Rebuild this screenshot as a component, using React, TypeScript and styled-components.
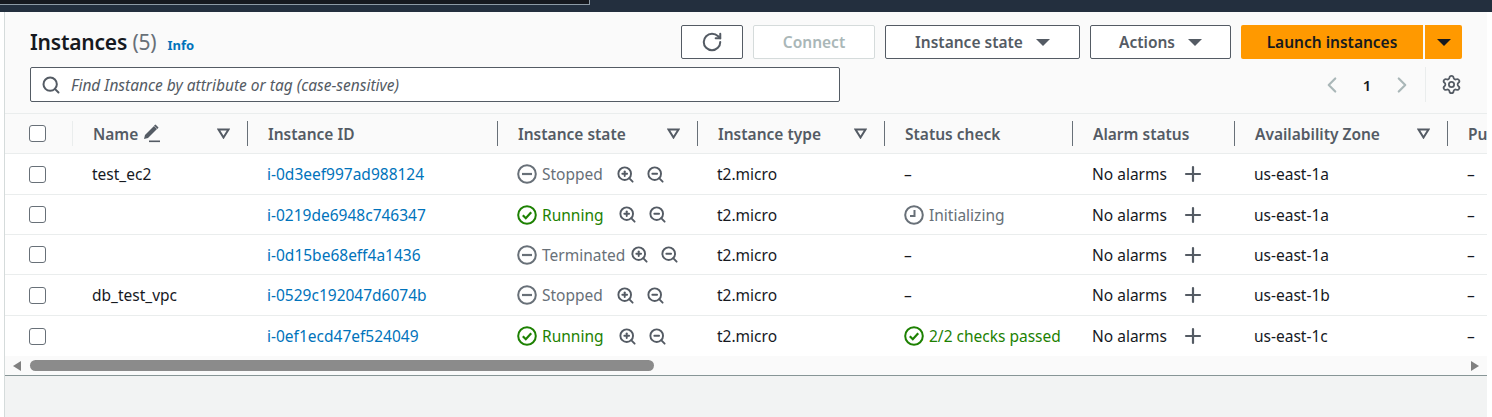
import React from 'react';
import styled, { createGlobalStyle } from 'styled-components';
import { RotateCw, Search, ChevronLeft, ChevronRight, Settings, Plus, ZoomIn, ZoomOut } from 'lucide-react';

const COLUMNS = '67px 175px 250px 200px 187px 188px 162px 213px 40px';

const GlobalStyle = createGlobalStyle`
  html, body {
    margin: 0;
    padding: 0;
    width: 1492px;
    height: 417px;
    overflow: hidden;
    background: #ffffff;
    font-family: "Noto Sans", "Open Sans", sans-serif;
    font-size: 16px;
    color: #16191f;
  }
`;

const TopBar = styled.div`
  height: 12px;
  background: #232f3e;
`;

const TabStrip = styled.div`
  width: 589px;
  height: 4px;
  background: #16191f;
  border-right: 1px solid #8d9aa5;
  border-bottom: 1px solid #8d9aa5;
`;

const Page = styled.div`
  width: 1482px;
  margin-left: 4px;
  border-left: 1px solid #d5dbdb;
  height: 405px;
  display: flex;
  flex-direction: column;
`;

const Panel = styled.section`
  background: #fafafa;
  overflow: hidden;
`;

const PanelHead = styled.div`
  height: 102px;
  box-sizing: border-box;
  padding: 13px 25px 0 25px;
  border-bottom: 1px solid #eaeded;
`;

const TitleRow = styled.div`
  height: 34px;
  display: flex;
  align-items: center;
  justify-content: space-between;
`;

const TitleGroup = styled.div`
  display: flex;
  align-items: baseline;
  gap: 11px;
`;

const Title = styled.h1`
  margin: 0;
  font-size: 21px;
  line-height: 30px;
  font-weight: 600;
  color: #16191f;
  letter-spacing: -0.2px;
  span {
    font-weight: 400;
    color: #687078;
  }
`;

const InfoLink = styled.a`
  font-size: 13px;
  font-weight: 700;
  color: #0073bb;
`;

const Actions = styled.div`
  display: flex;
  gap: 10px;
`;

const Button = styled.button<{ $disabled?: boolean; $width: number }>`
  width: ${p => p.$width}px;
  height: 34px;
  box-sizing: border-box;
  padding: 0;
  display: flex;
  align-items: center;
  justify-content: center;
  gap: 13px;
  background: #ffffff;
  border: 1px solid ${p => (p.$disabled ? '#d5dbdb' : '#545b64')};
  border-radius: 2px;
  font-family: inherit;
  font-size: 15.5px;
  font-weight: 600;
  color: ${p => (p.$disabled ? '#aab7b8' : '#545b64')};
`;

const SplitButton = styled.div`
  display: flex;
  gap: 2px;
`;

const PrimaryButton = styled.button<{ $width: number; $round: string }>`
  width: ${p => p.$width}px;
  height: 34px;
  padding: 0;
  border: 0;
  border-radius: ${p => p.$round};
  display: flex;
  align-items: center;
  justify-content: center;
  background: #ff9900;
  font-family: inherit;
  font-size: 15.5px;
  font-weight: 600;
  color: #16191f;
`;

const Caret = styled.i<{ $color: string; $size?: number }>`
  display: block;
  width: 0;
  height: 0;
  border-left: ${p => p.$size ?? 7}px solid transparent;
  border-right: ${p => p.$size ?? 7}px solid transparent;
  border-top: ${p => p.$size ?? 7}px solid ${p => p.$color};
`;

const FilterRow = styled.div`
  display: flex;
  align-items: center;
  justify-content: space-between;
  margin-top: 8px;
  height: 35px;
`;

const SearchBox = styled.div`
  width: 810px;
  height: 35px;
  box-sizing: border-box;
  padding-left: 10px;
  display: flex;
  align-items: center;
  gap: 10px;
  background: #ffffff;
  border: 1px solid #545b64;
  border-radius: 2px;
  color: #545b64;
`;

const Placeholder = styled.span`
  font-size: 15.5px;
  font-style: italic;
  color: #545b64;
`;

const Pager = styled.div`
  display: flex;
  align-items: center;
  height: 35px;
  color: #aab7b8;
`;

const PageNumber = styled.b`
  width: 44px;
  text-align: center;
  font-size: 15px;
  font-weight: 600;
  color: #16191f;
`;

const PagerGear = styled.div`
  height: 35px;
  margin-left: 10px;
  padding-left: 15px;
  border-left: 1px solid #eaeded;
  display: flex;
  align-items: center;
  color: #545b64;
`;

const TableClip = styled.div`
  overflow: hidden;
`;

const HeadRow = styled.div`
  display: grid;
  grid-template-columns: ${COLUMNS};
  height: 40px;
  border-bottom: 1px solid #eaeded;
  box-sizing: border-box;
  background: #fafafa;
  align-items: center;
`;

const HeadCell = styled.div<{ $divider?: string }>`
  height: 25px;
  box-sizing: border-box;
  display: flex;
  align-items: center;
  justify-content: space-between;
  padding: 0 17px 0 20px;
  white-space: nowrap;
  font-size: 15.5px;
  font-weight: 600;
  color: #545b64;
  border-left: ${p => (p.$divider ? `1px solid ${p.$divider}` : '0')};
`;

const NameLabel = styled.span`
  display: inline-flex;
  align-items: center;
  gap: 5px;
`;

const CheckCell = styled.div`
  padding-left: 24px;
  display: flex;
  align-items: center;
`;

const Checkbox = styled.span`
  display: block;
  width: 17px;
  height: 17px;
  box-sizing: border-box;
  background: #ffffff;
  border: 1px solid #687078;
  border-radius: 3px;
`;

const Row = styled.div<{ $height: number }>`
  display: grid;
  grid-template-columns: ${COLUMNS};
  height: ${p => p.$height}px;
  box-sizing: border-box;
  background: #ffffff;
  border-bottom: 1px solid #eaeded;
  align-items: center;
  font-size: 15.5px;
  &:last-of-type {
    border-bottom: 0;
  }
`;

const Cell = styled.div`
  padding-left: 20px;
  white-space: nowrap;
  overflow: hidden;
  display: flex;
  align-items: center;
  color: #16191f;
`;

const IdLink = styled.a`
  color: #0073bb;
`;

const StatusText = styled.span<{ $color: string }>`
  display: inline-flex;
  align-items: center;
  gap: 5px;
  color: ${p => p.$color};
`;

const ZoomGroup = styled.span<{ $gap: number }>`
  display: inline-flex;
  margin-left: ${p => p.$gap}px;
  gap: 11px;
  color: #545b64;
`;

const AlarmAdd = styled.span`
  display: inline-flex;
  margin-left: 14px;
  color: #545b64;
`;

const ScrollBar = styled.div`
  height: 19px;
  display: flex;
  align-items: center;
  padding: 0 8px;
  background: #fafafa;
  border-bottom: 1px solid #879596;
`;

const ScrollTrack = styled.div`
  flex: 1;
  padding: 0 8px 0 9px;
`;

const Thumb = styled.div`
  width: 624px;
  height: 11px;
  border-radius: 6px;
  background: #8b8b8b;
`;

const Arrow = styled.i<{ $dir: 'left' | 'right' }>`
  display: block;
  width: 0;
  height: 0;
  border-top: 5px solid transparent;
  border-bottom: 5px solid transparent;
  ${p => (p.$dir === 'left' ? 'border-right' : 'border-left')}: 8px solid #808080;
`;

const Footer = styled.div`
  flex: 1;
  background: #f2f3f3;
`;

const StatusIcon = ({ kind }: { kind: string }) => {
  const color = kind === 'ok' ? '#1d8102' : '#687078';
  return (
    <svg width="20" height="20" viewBox="0 0 20 20" fill="none" stroke={color} strokeWidth="2">
      <circle cx="10" cy="10" r="8.8" />
      {kind === 'ok' && <path d="M5.8 10.2l3 3 5.4-6" strokeWidth="2.2" />}
      {kind === 'stop' && <path d="M5 10h10" strokeWidth="2.2" />}
      {kind === 'clock' && <path d="M10.5 5v6H6" />}
    </svg>
  );
};

const PencilIcon = () => (
  <svg width="18" height="19" viewBox="0 0 18 19" fill="#545b64">
    <path d="M1 15l1-4L11 2l3 3-9 9z" />
    <path d="M11 1.5l1.5-1 3 3-1 1.5z" />
    <rect x="6" y="16.5" width="11" height="1.6" />
  </svg>
);

const SortIcon = () => (
  <svg width="13" height="11" viewBox="0 0 13 11" fill="none" stroke="#545b64" strokeWidth="2">
    <path d="M1.5 1.5h10L6.5 9.5z" />
  </svg>
);

const rows = [
  { name: 'test_ec2', id: 'i-0d3eef997ad988124', state: 'Stopped', check: '', az: 'us-east-1a', h: 41 },
  { name: '', id: 'i-0219de6948c746347', state: 'Running', check: 'Initializing', az: 'us-east-1a', h: 40 },
  { name: '', id: 'i-0d15be68eff4a1436', state: 'Terminated', check: '', az: 'us-east-1a', h: 40 },
  { name: 'db_test_vpc', id: 'i-0529c192047d6074b', state: 'Stopped', check: '', az: 'us-east-1b', h: 41 },
  { name: '', id: 'i-0ef1ecd47ef524049', state: 'Running', check: '2/2 checks passed', az: 'us-east-1c', h: 40 },
];

export default function App() {
  return (
    <>
      <GlobalStyle />
      <TopBar>
        <TabStrip />
      </TopBar>
      <Page>
        <Panel>
          <PanelHead>
            <TitleRow>
              <TitleGroup>
                <Title>
                  Instances <span>(5)</span>
                </Title>
                <InfoLink>Info</InfoLink>
              </TitleGroup>
              <Actions>
                <Button $width={62} aria-label="Refresh">
                  <RotateCw size={22} strokeWidth={2.2} />
                </Button>
                <Button $width={122} $disabled>Connect</Button>
                <Button $width={195}>
                  Instance state <Caret $color="#545b64" />
                </Button>
                <Button $width={141}>
                  Actions <Caret $color="#545b64" />
                </Button>
                <SplitButton>
                  <PrimaryButton $width={182} $round="2px 0 0 2px">Launch instances</PrimaryButton>
                  <PrimaryButton $width={37} $round="0 2px 2px 0" aria-label="More">
                    <Caret $color="#16191f" />
                  </PrimaryButton>
                </SplitButton>
              </Actions>
            </TitleRow>
            <FilterRow>
              <SearchBox>
                <Search size={20} strokeWidth={2.4} />
                <Placeholder>Find Instance by attribute or tag (case-sensitive)</Placeholder>
              </SearchBox>
              <Pager>
                <ChevronLeft size={26} strokeWidth={2} />
                <PageNumber>1</PageNumber>
                <ChevronRight size={26} strokeWidth={2} />
                <PagerGear>
                  <Settings size={21} strokeWidth={2} />
                </PagerGear>
              </Pager>
            </FilterRow>
          </PanelHead>
          <TableClip>
            <HeadRow>
              <CheckCell>
                <Checkbox />
              </CheckCell>
              <HeadCell $divider="#eaeded">
                <NameLabel>
                  Name <PencilIcon />
                </NameLabel>
                <SortIcon />
              </HeadCell>
              <HeadCell $divider="#687078">Instance ID</HeadCell>
              <HeadCell $divider="#687078">
                Instance state <SortIcon />
              </HeadCell>
              <HeadCell $divider="#687078">
                Instance type <SortIcon />
              </HeadCell>
              <HeadCell $divider="#687078">Status check</HeadCell>
              <HeadCell $divider="#687078">Alarm status</HeadCell>
              <HeadCell $divider="#687078">
                Availability Zone <SortIcon />
              </HeadCell>
              <HeadCell $divider="#687078">Pu</HeadCell>
            </HeadRow>
            {rows.map(row => (
              <Row key={row.id} $height={row.h}>
                <CheckCell>
                  <Checkbox />
                </CheckCell>
                <Cell>{row.name}</Cell>
                <Cell>
                  <IdLink>{row.id}</IdLink>
                </Cell>
                <Cell>
                  <StatusText $color={row.state === 'Running' ? '#1d8102' : '#687078'}>
                    <StatusIcon kind={row.state === 'Running' ? 'ok' : 'stop'} />
                    {row.state}
                  </StatusText>
                  <ZoomGroup $gap={row.state === 'Terminated' ? 5 : row.state === 'Running' ? 14 : 13}>
                    <ZoomIn size={19} strokeWidth={2.4} />
                    <ZoomOut size={19} strokeWidth={2.4} />
                  </ZoomGroup>
                </Cell>
                <Cell>t2.micro</Cell>
                <Cell>
                  {row.check === '' && '–'}
                  {row.check === 'Initializing' && (
                    <StatusText $color="#687078">
                      <StatusIcon kind="clock" />
                      {row.check}
                    </StatusText>
                  )}
                  {row.check === '2/2 checks passed' && (
                    <StatusText $color="#1d8102">
                      <StatusIcon kind="ok" />
                      {row.check}
                    </StatusText>
                  )}
                </Cell>
                <Cell>
                  No alarms
                  <AlarmAdd>
                    <Plus size={24} strokeWidth={2.2} />
                  </AlarmAdd>
                </Cell>
                <Cell>{row.az}</Cell>
                <Cell>–</Cell>
              </Row>
            ))}
          </TableClip>
          <ScrollBar>
            <Arrow $dir="left" />
            <ScrollTrack>
              <Thumb />
            </ScrollTrack>
            <Arrow $dir="right" />
          </ScrollBar>
        </Panel>
        <Footer />
      </Page>
    </>
  );
}
